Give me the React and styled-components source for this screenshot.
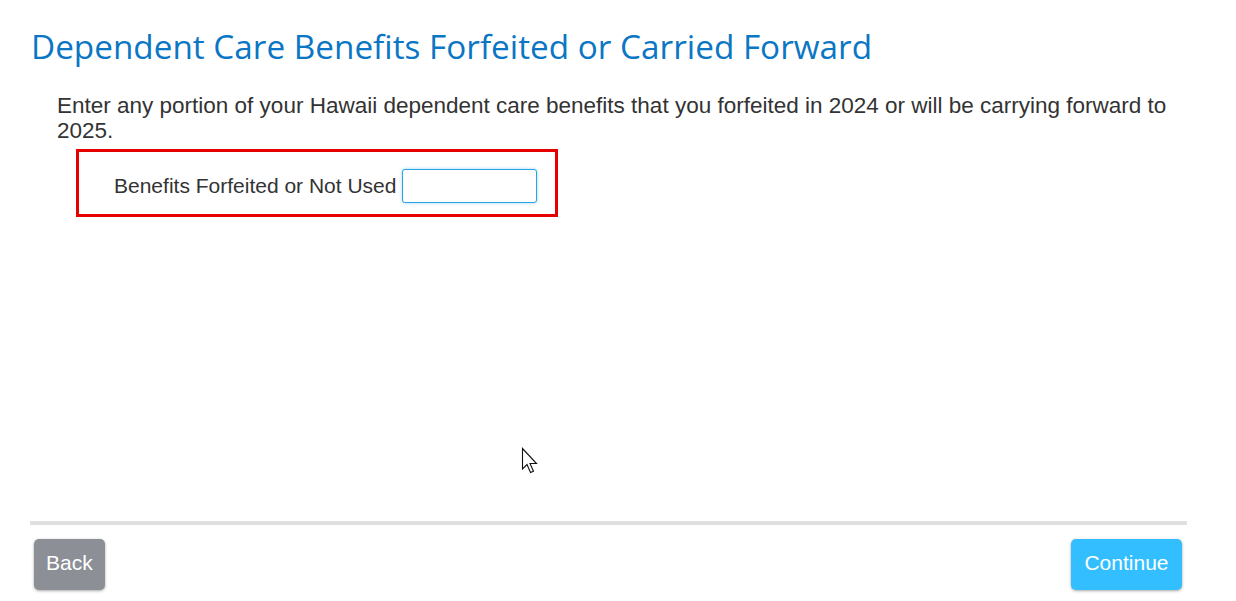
import React, { useState } from 'react';
import styled, { createGlobalStyle } from 'styled-components';

const GlobalStyle = createGlobalStyle`
  html, body {
    margin: 0;
    padding: 0;
    background: #ffffff;
  }
  body {
    font-family: "Liberation Sans", Arial, sans-serif;
    color: #333333;
  }
`;

const App = () => {
  const [amount, setAmount] = useState('');

  return (
    <Page>
      <GlobalStyle />
      <Title>Dependent Care Benefits Forfeited or Carried Forward</Title>

      <Content>
        <Intro>
          Enter any portion of your Hawaii dependent care benefits that you forfeited in 2024 or will be carrying forward to 2025.
        </Intro>

        <FieldBox>
          <FieldLabel htmlFor="forfeited">Benefits Forfeited or Not Used</FieldLabel>
          <AmountInput
            id="forfeited"
            type="text"
            value={amount}
            onChange={(e) => setAmount(e.target.value)}
          />
        </FieldBox>
      </Content>

      <Spacer />

      <Footer>
        <Divider />
        <ButtonRow>
          <NavButton $variant="back">Back</NavButton>
          <NavButton $variant="primary">Continue</NavButton>
        </ButtonRow>
      </Footer>

      <Cursor width="20" height="30" viewBox="0 0 20 30">
        <path
          d="M1.5 1.5 L1.5 22 L6 17.5 L9.5 25.5 L12.5 24.2 L9 16.5 L15.5 16.5 Z"
          fill="#ffffff"
          stroke="#111111"
          strokeWidth="1.1"
          strokeLinejoin="miter"
        />
      </Cursor>
    </Page>
  );
};

// Styled Components
const Page = styled.div`
  position: relative;
  width: 1236px;
  height: 601px;
  display: flex;
  flex-direction: column;
  box-sizing: border-box;
  padding: 27px 0 0 0;
  overflow: hidden;
`;

const Title = styled.h1`
  margin: 0 0 0 31px;
  font-family: "Open Sans", Lato, sans-serif;
  font-weight: 400;
  font-size: 33.3px;
  line-height: 38px;
  color: #0a76c4;
  white-space: nowrap;
`;

const Content = styled.div`
  padding: 28px 40px 0 57px;
`;

const Intro = styled.p`
  margin: 0;
  font-size: 22.5px;
  line-height: 25px;
  color: #333333;
  max-width: 1125px;
`;

const FieldBox = styled.div`
  margin: 6px 0 0 19px;
  width: 482px;
  height: 68px;
  box-sizing: border-box;
  border: 3px solid #e60000;
  display: flex;
  align-items: center;
  padding: 6px 0 0 35px;
  gap: 6px;
`;

const FieldLabel = styled.label`
  font-size: 21px;
  color: #333333;
  white-space: nowrap;
`;

const AmountInput = styled.input`
  width: 135px;
  height: 34px;
  box-sizing: border-box;
  border: 1.5px solid #2aa4e6;
  border-radius: 3px;
  box-shadow: 0 0 3px rgba(42, 164, 230, 0.5);
  outline: none;
  font-family: inherit;
  font-size: 18px;
  padding: 0 8px;
`;

const Spacer = styled.div`
  flex: 1;
`;

const Footer = styled.div`
  padding: 0 49px 11px 30px;
`;

const Divider = styled.div`
  height: 4px;
  background: #e0e0e0;
`;

const ButtonRow = styled.div`
  display: flex;
  justify-content: space-between;
  padding: 14px 5px 0 4px;
`;

const NavButton = styled.button`
  height: 51px;
  padding: ${(p) => (p.$variant === 'primary' ? '0 13.5px 3px' : '0 12px 3px')};
  border: none;
  border-radius: 5px;
  font-family: "Liberation Sans", Arial, sans-serif;
  font-size: 21px;
  color: #ffffff;
  cursor: pointer;
  background: ${(p) => (p.$variant === 'primary' ? '#33bfff' : '#8c8f96')};
  box-shadow: 0 1px 3px rgba(0, 0, 0, 0.35);
`;

const Cursor = styled.svg`
  position: absolute;
  left: 521px;
  top: 447px;
  pointer-events: none;
`;

export default App;
